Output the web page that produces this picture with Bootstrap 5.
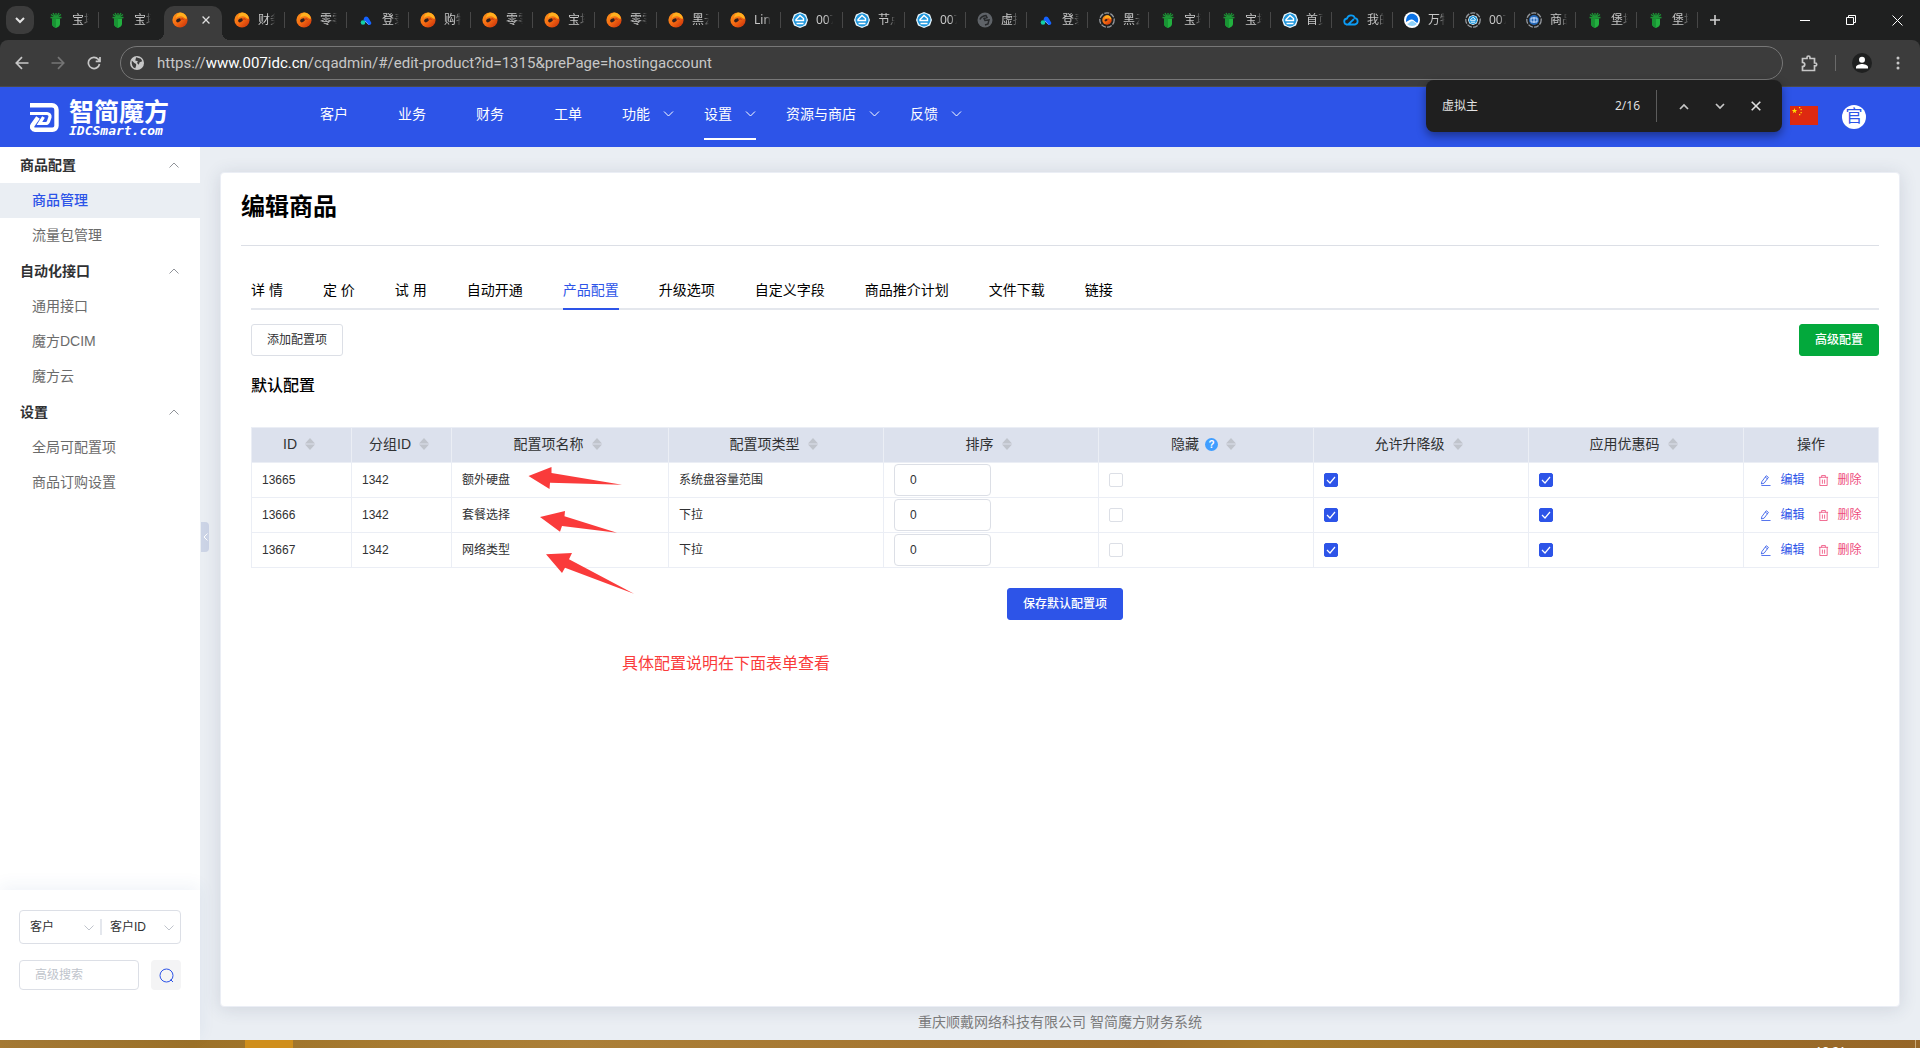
<!DOCTYPE html>
<html lang="zh-CN">
<head>
<meta charset="utf-8">
<meta name="viewport" content="width=device-width, initial-scale=1">
<title>编辑商品</title>
<link href="https://cdn.jsdelivr.net/npm/bootstrap@5.3.0/dist/css/bootstrap.min.css" rel="stylesheet">
<style>
:root { --brand: #2d54e8; --line: #ebeef5; --edge: #dcdfe6; --chrome: #3c3c3c; }
body { font-family: "Liberation Sans", "Noto Sans CJK SC", sans-serif; font-size: 14px; line-height: 20px; color: #303133; background: #eaeef3; }
a { text-decoration: none; color: inherit; }
button { font-family: inherit; }
.plain { border: 0; background: none; padding: 0; color: inherit; }
svg { display: block; flex: none; }

/* browser frame */
.browser-ui { font-family: "Noto Sans", "Noto Sans CJK SC", sans-serif; color: #dedede; }
.tabstrip { height: 40px; background: #1f2020; }
.tab-search { width: 28px; height: 28px; border-radius: 10px; background: var(--chrome); margin: 0 3px 0 6px; }
.btab { flex: 1 1 61px; min-width: 0; height: 40px; padding-left: 11px; gap: 8px; font-size: 12px; line-height: 20px; position: relative; color: #c7c7c7; cursor: default; }
.btab:nth-child(-n+14) { flex-basis: 62px; }
.btab.sep::after { content: ""; position: absolute; right: 0; top: 12px; height: 16px; border-right: 1px solid #474747; }
.btab span { width: 17px; overflow: hidden; white-space: nowrap; -webkit-mask-image: linear-gradient(90deg, #000 60%, transparent); mask-image: linear-gradient(90deg, #000 60%, transparent); }
.btab-active { flex: 1 1 58px; min-width: 0; height: 34px; margin: 6px 1px 0 3px; padding: 0 8px 6px; background: var(--chrome); border-radius: 10px 10px 0 0; position: relative; }
.btab-active::before, .btab-active::after { content: ""; position: absolute; bottom: 0; width: 8px; height: 8px; }
.btab-active::before { left: -8px; background: radial-gradient(circle at 0 0, transparent 8px, var(--chrome) 8px); }
.btab-active::after { right: -8px; background: radial-gradient(circle at 100% 0, transparent 8px, var(--chrome) 8px); }
.new-tab { width: 34px; margin-right: 50px; }
.win-btn { width: 46px; height: 40px; }
.toolbar-wrap { background: #1f2020; }
.addressbar { height: 47px; background: var(--chrome); border-radius: 8px 8px 0 0; border-bottom: 1px solid #4a4a4a; }
.tool-btn { width: 36px; height: 36px; }
.tool-btn svg { margin: auto; }
.tool-rule { height: 16px; border-left: 1px solid #6a6a6a; }
.omnibox { height: 34px; border: 1px solid #777; border-radius: 17px; padding: 0 9px; gap: 13px; font-family: Roboto, sans-serif; font-size: 15px; margin-left: 8px; color: #c7c7c7; }
.findbar { position: absolute; right: 138px; top: 80px; width: 356px; height: 52px; background: #1f1f1f; border-radius: 8px; box-shadow: 0 4px 10px rgba(0,0,0,.4); padding: 0 8px 0 16px; font-size: 12px; z-index: 5; }
.findbar input { width: 150px; border: 0; outline: 0; background: none; color: #e3e3e3; padding: 0; }
.find-rule { width: 1px; height: 32px; background: #5c5c5c; margin: 0 9px 0 16px; }

/* site header */
.site-head { height: 60px; background: var(--brand); color: #fff; padding: 0 54px 0 30px; }
.brand-box { width: 265px; gap: 10px; }
.brand-cn { font-size: 25px; line-height: 24px; font-weight: 700; }
.brand-en { font-family: "DejaVu Sans Mono", monospace; font-size: 13px; line-height: 14px; font-weight: 700; font-style: italic; }
.topnav a { height: 53px; padding-top: 3px; display: flex; align-items: center; border-bottom: 2px solid transparent; margin: 0 25px; }
.topnav a.has-menu { margin: 0 15px; gap: 13px; }
.topnav a.on { border-color: #fff; }
.user-dot { width: 24px; height: 24px; border-radius: 50%; background: #fff; color: var(--brand); font-size: 17px; line-height: 24px; text-align: center; }

/* sidebar */
.side { width: 200px; flex: none; background: #fff; position: relative; }
.side-head { height: 36px; padding: 0 21px 0 20px; font-weight: 700; width: 100%; }
.side a { display: block; height: 35px; line-height: 34px; padding-left: 32px; color: #6b6b6b; }
.side a.on { background: #eaeef3; color: var(--brand); font-weight: 500; }
.side-foot { height: 150px; padding: 20px 19px 0; box-shadow: 0 -4px 16px rgba(45,84,160,.07); }
.pick { height: 34px; border: 1px solid var(--edge); border-radius: 4px; margin-bottom: 16px; }
.pick label { flex: 1; position: relative; }
.pick label + label::before { content: ""; position: absolute; left: 0; top: 8px; height: 16px; border-left: 2px solid #e4e7ed; }
.pick select { width: 100%; height: 32px; border: 0; background: none; appearance: none; padding: 0 0 0 10px; font-size: 12px; color: #303133; outline: 0; }
.pick svg { position: absolute; right: 6px; top: 14px; pointer-events: none; }
.side-search { width: 120px; height: 30px; border: 1px solid var(--edge); border-radius: 4px; padding: 0 15px; font-size: 12px; outline: 0; }
.side-search::placeholder { color: #c0c4cc; }
.search-btn { width: 30px; height: 30px; border-radius: 4px; background: #f4f4f5; }
.fold { position: absolute; left: 201px; top: 375px; width: 8px; height: 30px; background: #ccd4e6; border-radius: 0 4px 4px 0; }

/* content */
.sheet { margin: 25px 20px 0; flex: 1; background: #fff; border: 1px solid var(--line); border-radius: 4px; box-shadow: 0 2px 18px rgba(40,60,90,.14); padding: 0 20px; position: relative; }
.sheet h1 { font-size: 24px; line-height: 34px; font-weight: 700; color: #000; margin: 0; padding: 17px 0 21px; border-bottom: 1px solid var(--edge); }
.sheet-body { padding-left: 10px; }
.ptabs { margin: 28px 0 14px; height: 36px; gap: 40px; color: #000; box-shadow: inset 0 -2px #e4e7ed; }
.ptabs a { line-height: 32px; height: 36px; white-space: pre; border-bottom: 2px solid transparent; }
.ptabs a.on { color: var(--brand); border-color: var(--brand); }
.sbtn { height: 32px; border: 1px solid; border-radius: 3px; padding: 0 15px; font-size: 12px; line-height: 28px; }
.sbtn-line { border-color: var(--edge); background: #fff; color: #303133; }
.sbtn-green { border-color: #03a93c; background: #03a93c; color: #fff; font-weight: 500; }
.sbtn-blue { border-color: var(--brand); background: var(--brand); color: #fff; font-weight: 500; }
.sheet h2 { font-size: 16px; line-height: 22px; font-weight: 500; color: #000; margin: 19px 0 30px; }
.cfg { width: 100%; table-layout: fixed; border-collapse: collapse; }
.cfg th, .cfg td { border: 1px solid var(--line); height: 35px; padding: 0 0 0 10px; }
.cfg th { background: #dce1ed; font-weight: 400; padding: 0; }
.cfg td { font-size: 12px; line-height: 20px; }
.cfg th.narrow { width: 100px; }
.cfg th.named { width: 217px; }
.cfg th.ops { width: 135px; }
.th-in { gap: 8px; line-height: 18px; padding: 0 5px 2px 0; }
.ops .th-in { padding-right: 0; }
.cfg .num { display: block; width: 97px; height: 32px; border: 1px solid var(--edge); border-radius: 4px; padding: 0 15px; font-size: 12px; color: #303133; outline: 0; }
.cfg .form-check-input { display: block; width: 14px; height: 14px; margin: 0; border: 1px solid var(--edge); border-radius: 2px; }
.cfg .form-check-input:checked { background-color: var(--brand); border-color: var(--brand); background-image: url("data:image/svg+xml,%3Csvg xmlns='http://www.w3.org/2000/svg' viewBox='0 0 12 12'%3E%3Cpath d='M2 6l3 3 5-6' fill='none' stroke='white' stroke-width='1.2'/%3E%3C/svg%3E"); }
.act { gap: 9px; }
.act-edit { color: var(--brand); }
.act-del { color: #ee4b7b; }
.help-dot { width: 13px; height: 13px; margin-left: -2px; border-radius: 50%; background: #409eff; color: #fff; font-size: 10px; line-height: 13px; font-weight: 700; text-align: center; }
.notes { position: absolute; left: 0; top: 0; pointer-events: none; }
.note-text { position: absolute; left: 401px; top: 480px; font-size: 16px; line-height: 22px; color: #fa3b3b; margin: 0; }
.site-foot { height: 33px; line-height: 30px; text-align: center; color: #7c7c7c; }

/* desktop task bar */
.taskbar { height: 8px; background: linear-gradient(90deg, #a67a34, #9c7128 10%, #a67a30 20%, #ab7f38 30%, #a0702c 60%, #a67a2c 66%, #966628); overflow: hidden; padding-left: 245px; font: 12px/16px "Noto Sans", sans-serif; color: #fff; }
.task-on { width: 48px; background: #cf8e1c; }
.show-desk { border-left: 1px solid #c9ab7c; margin-left: 69px; width: 5px; }
</style>
</head>
<body class="vh-100 d-flex flex-column overflow-hidden">
<svg width="0" height="0" class="position-absolute" aria-hidden="true">
<defs>
<linearGradient id="og" x1="0" y1="0" x2="1" y2="1"><stop offset="0" stop-color="#ff9a1c"/><stop offset=".5" stop-color="#f56a12"/><stop offset="1" stop-color="#c42a0a"/></linearGradient>
<symbol id="f-orange" viewBox="0 0 16 16"><circle cx="8" cy="8" r="7.600" fill="url(#og)"/><path d="M8 .5a7.500 7.500 0 0 1 7 6c-2 1-3-1.500-5-2s-5 0-6 2c0-3 2-5.500 4-6z" fill="#ffb01e"/><ellipse cx="6.500" cy="8.300" rx="2.600" ry="1.700" transform="rotate(-30 6.500 8.300)" fill="#33201c"/><path d="M8 8c1-1 2.500-1.500 3.500-.6" stroke="#b02a0c" fill="none"/></symbol>
<symbol id="f-green" viewBox="0 0 16 16"><path d="M4 6.500h8V12c0 2-2 3.300-4 4-2-.7-4-2-4-4z" fill="#22b03f"/><path d="M8 6.500V16c-2-.7-4-2-4-4V6.500z" fill="#199434"/><path d="M8 1v5M3 2.500 8 6l5-3.500M2.500 5.500 8 6l5.500-.5M5 1l3 5 3-5" stroke="#1c9435" stroke-width="1.300" fill="none"/></symbol>
<symbol id="f-peaks" viewBox="0 0 16 16"><path d="M8 4.500a3 3 0 0 1 2.800 2l2.500 4.200a2 2 0 0 1-3.300 1.800L5.500 8 6 6a2.500 2.500 0 0 1 2-1.500z" fill="#1463ff"/><circle cx="5" cy="10.500" r="2.300" fill="#12d0a6"/><path d="M7 9l3.500 3.500" stroke="#6aa2ff"/></symbol>
<symbol id="f-hex" viewBox="0 0 16 16"><path d="M8 0l6 2.500L16 8l-2 5.500L8 16l-6-2.500L0 8l2-5.500z" fill="#e9f6fd"/><circle cx="8" cy="8" r="6.500" fill="#1e96dc"/><path d="M4 8.500V7.500L8 3.500l3.500 3v2zM4.500 11.500h7" stroke="#fff" stroke-width="1.400" fill="none"/></symbol>
<symbol id="f-globe" viewBox="0 0 16 16"><circle cx="8" cy="8" r="7.500" fill="#5f6368"/><path d="M3 7.500c1-3 3-3.500 6-4l1 2-3 1 1 2 4-.500-1 4-3 1" fill="none" stroke="#26282a" stroke-width="1.500"/></symbol>
<symbol id="f-ring" viewBox="0 0 16 16"><circle cx="8" cy="8" r="7.200" fill="none" stroke="#969a9f" stroke-width="1.300" stroke-dasharray="5 1.200"/></symbol>
<symbol id="f-cloud" viewBox="0 0 16 16"><path d="M4.500 12.500a3 3 0 0 1-.5-6 4.200 4.200 0 0 1 8-.3 3.200 3.200 0 0 1 0 6.300H5l6-5.500" fill="none" stroke="#0c9cf5" stroke-width="1.800"/></symbol>
<symbol id="f-wave" viewBox="0 0 16 16"><circle cx="8" cy="8" r="8" fill="#fff"/><path d="M7 1.800C11 1.500 14 4 14.200 8c0 1.500-.5 2.500-1 3C11 10 10 8 8 7.500S4 9 2 10C2 5 4 2.500 7 1.800z" fill="#0a73e8"/><path d="M3 12c2 0 3-3 5-3s3 2 5 3a7 7 0 0 1-10 0z" fill="#8fd2fa"/></symbol>
<symbol id="i-down" viewBox="0 0 10 6"><path d="M.5.500 5 5 9.500.5" fill="none" stroke="currentColor"/></symbol>
<symbol id="i-up" viewBox="0 0 10 6"><path d="M.5 5.500 5 1l4.500 4.500" fill="none" stroke="currentColor"/></symbol>
<symbol id="i-x" viewBox="0 0 10 10"><path d="M.7.7l8.600 8.600M9.300.7.700 9.300" fill="none" stroke="currentColor" stroke-width="1.600"/></symbol>
<symbol id="i-sort" viewBox="0 0 10 12"><path d="M5 0l5 5.500H0zM5 12l5-5.500H0z" fill="#c0c4cc"/></symbol>
<symbol id="i-pen" viewBox="0 0 12 12"><path d="M1.500 11.500h10M1.500 9.800 2 7.300 6.800.8l2.400 1.800-4.700 6.300zM5.700 2.300l2.400 1.800" fill="none" stroke="currentColor" stroke-width=".9"/></symbol>
<symbol id="i-bin" viewBox="0 0 12 12"><path d="M1 2.500h10M4 2.500v-2h4v2M2 2.500v9h8v-9M4.800 5v4.500M7.200 5v4.500" fill="none" stroke="currentColor" stroke-width=".9"/></symbol>
</defs>
</svg>

<div class="browser-ui">
  <div class="tabstrip d-flex align-items-center">
    <button class="plain tab-search d-flex align-items-center justify-content-center" aria-label="搜索标签页"><svg width="10" height="7" viewBox="0 0 10 7"><path d="M1 1l4 4 4-4" fill="none" stroke="#e3e3e3" stroke-width="2"/></svg></button>
    <div class="d-flex flex-grow-1 align-items-center" role="tablist">
      <div class="btab sep d-flex align-items-center" role="tab"><svg width="16" height="16"><use href="#f-green"/></svg><span>宝塔</span></div>
      <div class="btab d-flex align-items-center" role="tab"><svg width="16" height="16"><use href="#f-green"/></svg><span>宝塔</span></div>
      <div class="btab-active d-flex align-items-center justify-content-between" role="tab" aria-selected="true"><svg width="16" height="16"><use href="#f-orange"/></svg><button class="plain px-1" aria-label="关闭"><svg width="8" height="8"><use href="#i-x"/></svg></button></div>
      <div class="btab sep d-flex align-items-center" role="tab"><svg width="16" height="16"><use href="#f-orange"/></svg><span>财务</span></div>
      <div class="btab sep d-flex align-items-center" role="tab"><svg width="16" height="16"><use href="#f-orange"/></svg><span>零零</span></div>
      <div class="btab sep d-flex align-items-center" role="tab"><svg width="16" height="16"><use href="#f-peaks"/></svg><span>登录</span></div>
      <div class="btab sep d-flex align-items-center" role="tab"><svg width="16" height="16"><use href="#f-orange"/></svg><span>购物</span></div>
      <div class="btab sep d-flex align-items-center" role="tab"><svg width="16" height="16"><use href="#f-orange"/></svg><span>零零</span></div>
      <div class="btab sep d-flex align-items-center" role="tab"><svg width="16" height="16"><use href="#f-orange"/></svg><span>宝塔</span></div>
      <div class="btab sep d-flex align-items-center" role="tab"><svg width="16" height="16"><use href="#f-orange"/></svg><span>零零</span></div>
      <div class="btab sep d-flex align-items-center" role="tab"><svg width="16" height="16"><use href="#f-orange"/></svg><span>黑云</span></div>
      <div class="btab sep d-flex align-items-center" role="tab"><svg width="16" height="16"><use href="#f-orange"/></svg><span>Linux</span></div>
      <div class="btab sep d-flex align-items-center" role="tab"><svg width="16" height="16"><use href="#f-hex"/></svg><span>007</span></div>
      <div class="btab sep d-flex align-items-center" role="tab"><svg width="16" height="16"><use href="#f-hex"/></svg><span>节点</span></div>
      <div class="btab sep d-flex align-items-center" role="tab"><svg width="16" height="16"><use href="#f-hex"/></svg><span>007</span></div>
      <div class="btab sep d-flex align-items-center" role="tab"><svg width="16" height="16"><use href="#f-globe"/></svg><span>虚拟</span></div>
      <div class="btab sep d-flex align-items-center" role="tab"><svg width="16" height="16"><use href="#f-peaks"/></svg><span>登录</span></div>
      <div class="btab sep d-flex align-items-center" role="tab"><svg width="16" height="16"><use href="#f-ring"/><use href="#f-orange" x="3" y="3" width="10" height="10"/></svg><span>黑云</span></div>
      <div class="btab sep d-flex align-items-center" role="tab"><svg width="16" height="16"><use href="#f-green"/></svg><span>宝塔</span></div>
      <div class="btab sep d-flex align-items-center" role="tab"><svg width="16" height="16"><use href="#f-green"/></svg><span>宝塔</span></div>
      <div class="btab sep d-flex align-items-center" role="tab"><svg width="16" height="16"><use href="#f-hex"/></svg><span>首页</span></div>
      <div class="btab sep d-flex align-items-center" role="tab"><svg width="16" height="16"><use href="#f-cloud"/></svg><span>我的</span></div>
      <div class="btab sep d-flex align-items-center" role="tab"><svg width="16" height="16"><use href="#f-wave"/></svg><span>万物</span></div>
      <div class="btab sep d-flex align-items-center" role="tab"><svg width="16" height="16"><use href="#f-ring"/><use href="#f-hex" x="3" y="3" width="10" height="10"/></svg><span>007</span></div>
      <div class="btab sep d-flex align-items-center" role="tab"><svg width="16" height="16"><use href="#f-ring"/><circle cx="8" cy="8" r="5" fill="#2468b8"/><path d="M5 6h6v4H5zM8 5v6" fill="none" stroke="#cfe2ff"/></svg><span>商品</span></div>
      <div class="btab sep d-flex align-items-center" role="tab"><svg width="16" height="16"><use href="#f-green"/></svg><span>堡塔</span></div>
      <div class="btab sep d-flex align-items-center" role="tab"><svg width="16" height="16"><use href="#f-green"/></svg><span>堡塔</span></div>
    </div>
    <button class="plain new-tab" aria-label="新标签页"><svg class="mx-auto" width="12" height="12" viewBox="0 0 12 12"><path d="M6 1v10M1 6h10" stroke="#d0d0d0" stroke-width="1.600"/></svg></button>
    <button class="plain win-btn" aria-label="最小化"><svg class="mx-auto" width="10" height="10" viewBox="0 0 10 10"><path d="M0 5.500h10" stroke="#fff"/></svg></button>
    <button class="plain win-btn" aria-label="还原"><svg class="mx-auto" width="10" height="10" viewBox="0 0 10 10"><path d="M.5 2.500h7v7h-7zM2.500 2.500v-2h7v7h-2" fill="none" stroke="#fff"/></svg></button>
    <button class="plain win-btn" aria-label="关闭窗口"><svg class="mx-auto" width="11" height="11" viewBox="0 0 11 11"><path d="M.5.500l10 10M10.500.5l-10 10" stroke="#fff"/></svg></button>
  </div>
  <div class="toolbar-wrap">
    <div class="addressbar d-flex align-items-center px-1">
      <button class="plain tool-btn" aria-label="后退"><svg width="14" height="14" viewBox="0 0 14 14"><path d="M13.500 7H1.500M7 1.200 1.300 7 7 12.800" fill="none" stroke="#c7c7c7" stroke-width="1.700"/></svg></button>
      <button class="plain tool-btn" aria-label="前进"><svg width="14" height="14" viewBox="0 0 14 14"><path d="M.5 7h12M7 1.200 12.700 7 7 12.800" fill="none" stroke="#757575" stroke-width="1.700"/></svg></button>
      <button class="plain tool-btn" aria-label="重新加载"><svg width="14" height="14" viewBox="0 0 14 14"><path d="M12.500 8A5.600 5.600 0 1 1 11.200 3.200L13 5M13 1v4.300H8.700" fill="none" stroke="#c7c7c7" stroke-width="1.700"/></svg></button>
      <div class="omnibox d-flex align-items-center flex-grow-1">
        <svg width="14" height="14" viewBox="0 0 16 16"><circle cx="8" cy="8" r="8" fill="#c7c7c7"/><path d="M2 5l3 3 2 1v2l-1 3C3 13 1.500 10 2 5zM7 1.500 12.500 3 14 6l-3 1-1 3-2-2 1-2-3-1z" fill="#3c3c3c"/></svg>
        <span class="text-nowrap">https://<span class="text-white">www.007idc.cn</span>/cqadmin/#/edit-product?id=1315&amp;prePage=hostingaccount</span>
      </div>
      <button class="plain tool-btn ms-2" aria-label="扩展程序"><svg width="17" height="17" viewBox="0 0 17 17"><path d="M1.500 3.500H6V2.500a1.500 1.500 0 0 1 3 0v1h4.500V8h.8a1.400 1.400 0 0 1 0 2.800h-.8v4.700h-12v-4c3 0 3-4 0-4z" fill="none" stroke="#c7c7c7" stroke-width="1.700"/></svg></button>
      <span class="tool-rule ms-2"></span>
      <button class="plain tool-btn ms-2" aria-label="个人资料"><svg width="20" height="20" viewBox="0 0 20 20"><circle cx="10" cy="10" r="10" fill="#1f2020"/><circle cx="10" cy="6.800" r="3" fill="#fff"/><path d="M4 15.500v-1.500c0-2 4-3 6-3s6 1 6 3v1.500z" fill="#fff"/></svg></button>
      <button class="plain tool-btn" aria-label="菜单"><svg width="4" height="14" viewBox="0 0 4 14" fill="#c7c7c7"><circle cx="2" cy="2" r="1.500"/><circle cx="2" cy="7" r="1.500"/><circle cx="2" cy="12" r="1.500"/></svg></button>
    </div>
  </div>
  <div class="findbar d-flex align-items-center" role="search">
    <input type="text" value="虚拟主" aria-label="在页面中查找">
    <span class="ms-auto">2/16</span><span class="find-rule"></span>
    <button class="plain tool-btn" aria-label="上一个"><svg width="10" height="7" viewBox="0 0 10 7"><path d="M1 6l4-4 4 4" fill="none" stroke="#c7c7c7" stroke-width="1.700"/></svg></button>
    <button class="plain tool-btn" aria-label="下一个"><svg width="10" height="7" viewBox="0 0 10 7"><path d="M1 1l4 4 4-4" fill="none" stroke="#c7c7c7" stroke-width="1.700"/></svg></button>
    <button class="plain tool-btn" aria-label="关闭查找"><svg width="10" height="10"><use href="#i-x"/></svg></button>
  </div>
</div>

<header class="site-head d-flex align-items-center">
  <a href="#" class="brand-box d-flex align-items-center">
    <svg width="29" height="29" viewBox="0 0 29 29" fill="none" stroke="#fff"><path d="M0 2.300h22a4.500 4.500 0 0 1 4.500 4.500v16a4 4 0 0 1-4 4H5a3 3 0 0 1-2.500-4.500L8 14.500" stroke-width="4.400"/><path d="M0 10.500h17a3 3 0 0 1 3 3.500l-1.500 4.500a3 3 0 0 1-3 2H9.500L13.500 14" stroke-width="3.200"/></svg>
    <span class="pt-1"><span class="brand-cn d-block">智简魔方</span><span class="brand-en d-block">IDCSmart.com</span></span>
  </a>
  <nav class="topnav d-flex align-self-start">
    <a href="#">客户</a><a href="#">业务</a><a href="#">财务</a><a href="#">工单</a>
    <a href="#" class="has-menu">功能<svg width="11" height="6"><use href="#i-down"/></svg></a>
    <a href="#" class="has-menu on">设置<svg width="11" height="6"><use href="#i-down"/></svg></a>
    <a href="#" class="has-menu">资源与商店<svg width="11" height="6"><use href="#i-down"/></svg></a>
    <a href="#" class="has-menu">反馈<svg width="11" height="6"><use href="#i-down"/></svg></a>
  </nav>
  <div class="ms-auto d-flex align-items-center">
    <svg class="me-4 mb-1" width="28" height="19" viewBox="0 0 28 19"><path fill="#de2910" d="M0 0h28v19H0z"/><path fill="#ffde00" d="M4.500 2l.7 2H7.300L5.600 5.300l.6 2-1.700-1.200-1.700 1.200.6-2L1.700 4h2.100zM9 1h1.300v1.300H9zM10.500 3h1.300v1.300h-1.300zM10.500 6h1.300v1.300h-1.300zM9 8h1.300v1.300H9z"/></svg>
    <span class="user-dot">官</span>
  </div>
</header>

<div class="d-flex flex-grow-1">
  <aside class="side d-flex flex-column">
    <nav class="flex-grow-1">
      <button class="plain side-head d-flex align-items-center justify-content-between">商品配置<svg width="10" height="6" color="#909399"><use href="#i-up"/></svg></button>
      <a href="#" class="on">商品管理</a><a href="#">流量包管理</a>
      <button class="plain side-head d-flex align-items-center justify-content-between">自动化接口<svg width="10" height="6" color="#909399"><use href="#i-up"/></svg></button>
      <a href="#">通用接口</a><a href="#">魔方DCIM</a><a href="#">魔方云</a>
      <button class="plain side-head d-flex align-items-center justify-content-between">设置<svg width="10" height="6" color="#909399"><use href="#i-up"/></svg></button>
      <a href="#">全局可配置项</a><a href="#">商品订购设置</a>
    </nav>
    <form class="side-foot">
      <div class="pick d-flex">
        <label><select aria-label="类型"><option>客户</option></select><svg width="10" height="6" color="#c0c4cc"><use href="#i-down"/></svg></label>
        <label><select aria-label="字段"><option>客户ID</option></select><svg width="10" height="6" color="#c0c4cc"><use href="#i-down"/></svg></label>
      </div>
      <div class="d-flex justify-content-between">
        <input class="side-search" type="text" placeholder="高级搜索" aria-label="高级搜索">
        <button type="button" class="plain search-btn" aria-label="搜索"><svg class="mx-auto" width="15" height="15" viewBox="0 0 15 15"><circle cx="7.500" cy="7.500" r="6.500" fill="none" stroke="#2d54e8"/><path d="M11.500 11.500l2.500 2.500" stroke="#2d54e8"/></svg></button>
      </div>
    </form>
    <button class="plain fold" aria-label="收起"><svg class="mx-auto" width="5" height="8" viewBox="0 0 5 8"><path d="M4.500.5 1 4l3.500 3.500" fill="none" stroke="#fff"/></svg></button>
  </aside>

  <div class="flex-grow-1 d-flex flex-column">
    <main class="sheet">
      <h1>编辑商品</h1>
      <div class="sheet-body">
        <nav class="ptabs d-flex">
          <a href="#">详 情</a><a href="#">定 价</a><a href="#">试 用</a><a href="#">自动开通</a><a href="#" class="on">产品配置</a><a href="#">升级选项</a><a href="#">自定义字段</a><a href="#">商品推介计划</a><a href="#">文件下载</a><a href="#">链接</a>
        </nav>
        <div class="d-flex justify-content-between">
          <button class="sbtn sbtn-line">添加配置项</button>
          <button class="sbtn sbtn-green">高级配置</button>
        </div>
        <h2>默认配置</h2>
        <table class="cfg">
          <thead>
            <tr>
              <th class="narrow"><div class="th-in d-flex align-items-center justify-content-center">ID<svg width="10" height="12"><use href="#i-sort"/></svg></div></th>
              <th class="narrow"><div class="th-in d-flex align-items-center justify-content-center">分组ID<svg width="10" height="12"><use href="#i-sort"/></svg></div></th>
              <th class="named"><div class="th-in d-flex align-items-center justify-content-center">配置项名称<svg width="10" height="12"><use href="#i-sort"/></svg></div></th>
              <th><div class="th-in d-flex align-items-center justify-content-center">配置项类型<svg width="10" height="12"><use href="#i-sort"/></svg></div></th>
              <th><div class="th-in d-flex align-items-center justify-content-center">排序<svg width="10" height="12"><use href="#i-sort"/></svg></div></th>
              <th><div class="th-in d-flex align-items-center justify-content-center">隐藏<span class="help-dot">?</span><svg width="10" height="12"><use href="#i-sort"/></svg></div></th>
              <th><div class="th-in d-flex align-items-center justify-content-center">允许升降级<svg width="10" height="12"><use href="#i-sort"/></svg></div></th>
              <th><div class="th-in d-flex align-items-center justify-content-center">应用优惠码<svg width="10" height="12"><use href="#i-sort"/></svg></div></th>
              <th class="ops"><div class="th-in d-flex justify-content-center">操作</div></th>
            </tr>
          </thead>
          <tbody>
            <tr>
              <td>13665</td><td>1342</td><td>额外硬盘</td><td>系统盘容量范围</td>
              <td><input class="num" type="text" value="0" aria-label="排序 13665"></td>
              <td><input class="form-check-input" type="checkbox" aria-label="隐藏 13665"></td>
              <td><input class="form-check-input" type="checkbox" checked aria-label="允许升降级 13665"></td>
              <td><input class="form-check-input" type="checkbox" checked aria-label="应用优惠码 13665"></td>
              <td class="p-0"><div class="act d-flex justify-content-center"><a href="#" class="act act-edit d-flex align-items-center me-1"><svg width="11" height="11"><use href="#i-pen"/></svg>编辑</a><a href="#" class="act act-del d-flex align-items-center"><svg width="11" height="11"><use href="#i-bin"/></svg>删除</a></div></td>
            </tr>
            <tr>
              <td>13666</td><td>1342</td><td>套餐选择</td><td>下拉</td>
              <td><input class="num" type="text" value="0" aria-label="排序 13666"></td>
              <td><input class="form-check-input" type="checkbox" aria-label="隐藏 13666"></td>
              <td><input class="form-check-input" type="checkbox" checked aria-label="允许升降级 13666"></td>
              <td><input class="form-check-input" type="checkbox" checked aria-label="应用优惠码 13666"></td>
              <td class="p-0"><div class="act d-flex justify-content-center"><a href="#" class="act act-edit d-flex align-items-center me-1"><svg width="11" height="11"><use href="#i-pen"/></svg>编辑</a><a href="#" class="act act-del d-flex align-items-center"><svg width="11" height="11"><use href="#i-bin"/></svg>删除</a></div></td>
            </tr>
            <tr>
              <td>13667</td><td>1342</td><td>网络类型</td><td>下拉</td>
              <td><input class="num" type="text" value="0" aria-label="排序 13667"></td>
              <td><input class="form-check-input" type="checkbox" aria-label="隐藏 13667"></td>
              <td><input class="form-check-input" type="checkbox" checked aria-label="允许升降级 13667"></td>
              <td><input class="form-check-input" type="checkbox" checked aria-label="应用优惠码 13667"></td>
              <td class="p-0"><div class="act d-flex justify-content-center"><a href="#" class="act act-edit d-flex align-items-center me-1"><svg width="11" height="11"><use href="#i-pen"/></svg>编辑</a><a href="#" class="act act-del d-flex align-items-center"><svg width="11" height="11"><use href="#i-bin"/></svg>删除</a></div></td>
            </tr>
          </tbody>
        </table>
        <div class="text-center pt-1 mt-3"><button class="sbtn sbtn-blue">保存默认配置项</button></div>
      </div>
      <svg class="notes" width="440" height="440" viewBox="221 173 440 440" fill="#fa3b3b">
        <path d="M528.500 476 551.500 467v6L622 484.700l-72-2-.5 6.300z"/>
        <path d="M540 517l25-6-.5 5.300L617 532.700 562 526l-2 5.700z"/>
        <path d="M546 554.300 572 553l-3 6.300L634 593.700 565 567.700l-3 5.300z"/>
      </svg>
      <p class="note-text">具体配置说明在下面表单查看</p>
    </main>
    <footer class="site-foot">重庆顺戴网络科技有限公司 智简魔方财务系统</footer>
  </div>
</div>

<div class="taskbar d-flex">
  <span class="task-on"></span>
  <span class="ms-auto pt-1">18:21</span><span class="show-desk"></span>
</div>
<script src="https://cdn.jsdelivr.net/npm/bootstrap@5.3.0/dist/js/bootstrap.bundle.min.js"></script>
</body>
</html>
